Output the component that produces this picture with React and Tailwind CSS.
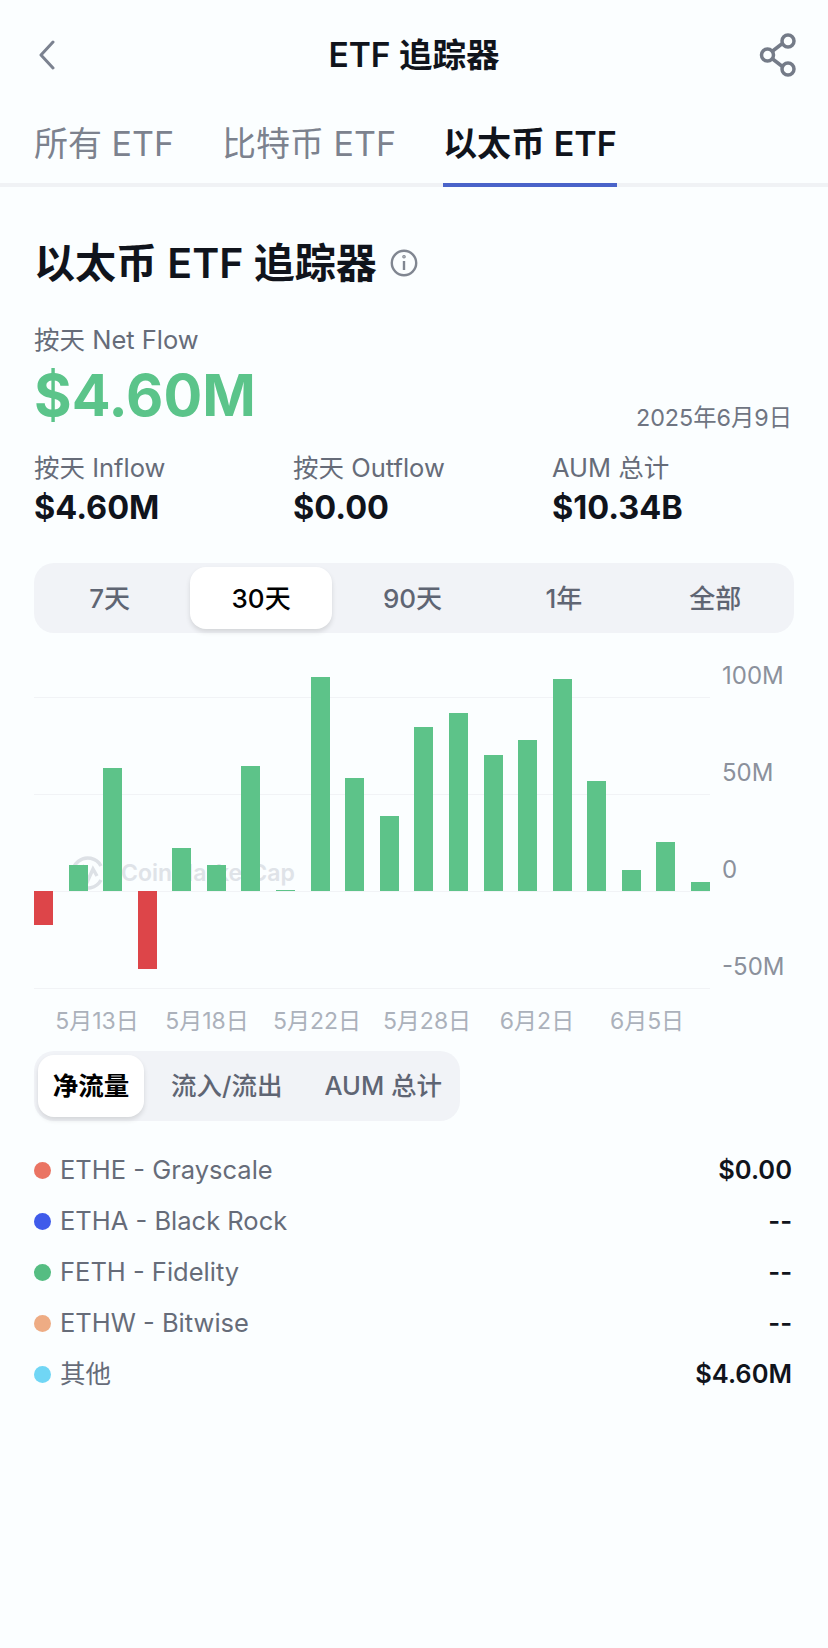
const ranges = ["7天", "30天", "90天", "1年", "全部"];
const stats = [
  { label: "按天 Inflow", value: "$4.60M" },
  { label: "按天 Outflow", value: "$0.00" },
  { label: "AUM 总计", value: "$10.34B" },
];
// positive = green bar above zero, negative = red bar below
const bars = [-34, 26, 123, -78, 43, 26, 125, 1, 214, 113, 75, 164, 178, 136, 151, 212, 110, 21, 49, 9];
const yLabels = ["100M", "50M", "0", "-50M"];
const xLabels = ["5月13日", "5月18日", "5月22日", "5月28日", "6月2日", "6月5日"];
const funds = [
  { name: "ETHE - Grayscale", value: "$0.00", dot: "bg-[#ea7463]" },
  { name: "ETHA - Black Rock", value: "--", dot: "bg-[#3f5bea]" },
  { name: "FETH - Fidelity", value: "--", dot: "bg-[#55bd82]" },
  { name: "ETHW - Bitwise", value: "--", dot: "bg-[#eeac84]" },
  { name: "其他", value: "$4.60M", dot: "bg-[#70d6f5]" },
];

function BackIcon() {
  return (
    <svg width="18" height="30" viewBox="0 0 18 30" fill="none" stroke="#7b8290" strokeWidth="3" strokeLinecap="round" strokeLinejoin="round">
      <polyline points="15,2 3,15 15,28" />
    </svg>
  );
}

function ShareIcon() {
  return (
    <svg width="40" height="44" viewBox="0 0 40 44" fill="none" stroke="#747b88" strokeWidth="3.5">
      <line x1="14" y1="18.5" x2="25" y2="10" />
      <line x1="14" y1="25.5" x2="25" y2="34" />
      <circle cx="30" cy="8" r="6" />
      <circle cx="9.5" cy="22" r="6" />
      <circle cx="30" cy="36" r="6" />
    </svg>
  );
}

function InfoIcon() {
  return (
    <svg width="28" height="28" viewBox="0 0 28 28" fill="none" stroke="#808691" strokeWidth="2.4">
      <circle cx="14" cy="14" r="12.2" />
      <line x1="14" y1="12" x2="14" y2="21" />
      <circle cx="14" cy="7.8" r="0.6" />
    </svg>
  );
}

function Watermark() {
  return (
    <div className="absolute left-[36px] top-[207px] flex items-center gap-[17px] text-[23px] font-semibold text-[#dfe3e8]">
      <svg width="34" height="38" viewBox="0 0 34 38" fill="none" stroke="#dde1e6" strokeWidth="3.5">
        <path d="M31 26a15 15 0 1 1 0-14" />
        <path d="M7 25l6-11 5 12 5-11 4 7" />
      </svg>
      <span>CoinMarketCap</span>
    </div>
  );
}

function Chart() {
  return (
    <div className="relative mt-[14px] h-[360px]">
      {[50, 147, 244, 341].map((top) => (
        <div key={top} className="absolute left-0 h-px w-[676px] bg-[#f1f3f6]" style={{ top }} />
      ))}
      <Watermark />
      <div className="absolute left-[688px] top-0 text-[24px] leading-[58px] text-[#8b919c]">
        {yLabels.map((label) => (
          <div key={label} className="h-[97px]">{label}</div>
        ))}
      </div>
      <div className="relative flex w-[676px] justify-between pt-[30px]">
        {bars.map((v, i) => (
          <div key={i} className="w-[19px]">
            <div className="flex h-[214px] items-end">
              {v > 0 && <div className="w-full bg-[#5dc389]" style={{ height: v }} />}
            </div>
            {v < 0 && <div className="w-full bg-[#dd4549]" style={{ height: -v }} />}
          </div>
        ))}
      </div>
    </div>
  );
}

export default function App() {
  return (
    <div className="min-h-[1648px] w-[828px] overflow-hidden bg-[#fbfeff] font-['Inter','Noto_Sans_CJK_SC',sans-serif] text-[#10141c]">
      <header className="flex h-[110px] items-center justify-between pl-[38px] pr-[30px]">
        <BackIcon />
        <h1 className="pl-[14px] text-[33.5px] font-semibold">ETF 追踪器</h1>
        <ShareIcon />
      </header>

      <nav className="flex h-[77px] border-b-4 border-[#f0f2f5] px-[34px] text-[34px] text-[#7c828e]">
        <div className="pt-[8px]">所有 ETF</div>
        <div className="ml-[48px] pt-[8px]">比特币 ETF</div>
        <div className="ml-[47px] -mb-1 border-b-4 border-[#4a63c9] pt-[8px] font-semibold text-[#10141c]">以太币 ETF</div>
      </nav>

      <main className="px-[34px]">
        <div className="mt-[50px] flex items-center gap-[13px]">
          <h2 className="text-[41px] font-semibold leading-[52px]">以太币 ETF 追踪器</h2>
          <InfoIcon />
        </div>

        <div className="mt-[35px] text-[25.5px] leading-[32px] text-[#666c79]">按天 Net Flow</div>
        <div className="mt-[3px] flex items-end justify-between">
          <div className="text-[57.5px] font-bold leading-[72px] text-[#5bc48a]">$4.60M</div>
          <div className="-mb-[5px] pr-[2px] text-[23.3px] text-[#6f7582]">2025年6月9日</div>
        </div>

        <div className="mt-[21px] grid grid-cols-[259px_259px_1fr]">
          {stats.map((s) => (
            <div key={s.label}>
              <div className="text-[25.5px] leading-[32px] text-[#666c79]">{s.label}</div>
              <div className="mt-[4px] text-[32.5px] font-bold leading-[40px]">{s.value}</div>
            </div>
          ))}
        </div>

        <div className="mt-[35px] h-[70px] rounded-[20px] bg-[#f1f3f7] py-1 pr-[3px]">
          <div className="grid h-full grid-cols-5">
            {ranges.map((r) => (
              <div key={r} className="px-[5px]">
                <div
                  className={
                    r === "30天"
                      ? "flex h-full items-center justify-center rounded-[16px] bg-white text-[26px] font-medium text-black shadow-[0_3px_5px_rgba(0,0,0,0.12)]"
                      : "flex h-full items-center justify-center text-[26px] font-medium text-[#5f6573]"
                  }
                >
                  {r}
                </div>
              </div>
            ))}
          </div>
        </div>

        <Chart />
      </main>

      <div className="grid grid-cols-[repeat(6,110px)] pl-[42px] text-center text-[23px] leading-[28px] text-[#abb1bb]">
        {xLabels.map((d) => (
          <span key={d}>{d}</span>
        ))}
      </div>

      <div className="mx-[34px] mt-[16px] flex h-[70px] w-[426px] items-center rounded-[20px] bg-[#f1f3f7] pl-1 text-[25.5px] font-medium text-[#5f6573]">
        <div className="flex h-[62px] w-[106px] items-center justify-center rounded-[16px] bg-white font-semibold text-black shadow-[0_3px_5px_rgba(0,0,0,0.12)]">净流量</div>
        <div className="ml-[27px]">流入/流出</div>
        <div className="ml-[42px]">AUM 总计</div>
      </div>

      <div className="mt-[24px] pl-[34px] pr-[36px]">
        {funds.map((f) => (
          <div key={f.name} className="flex h-[51px] items-center justify-between text-[25.5px]">
            <div className="flex items-center gap-[9px] text-[#666c79]">
              <span className={`h-[17px] w-[17px] rounded-full ${f.dot}`} />
              {f.name}
            </div>
            <div className="font-semibold text-[#10141c]">{f.value}</div>
          </div>
        ))}
      </div>
    </div>
  );
}
